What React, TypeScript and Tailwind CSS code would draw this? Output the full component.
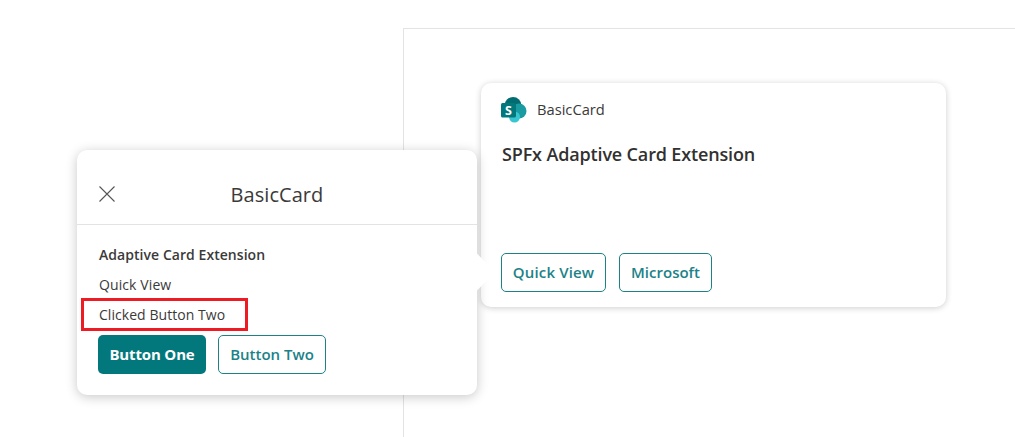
const font = "font-['Open_Sans','Noto_Sans',sans-serif]";

function SharePointLogo() {
  return (
    <svg width="26" height="26" viewBox="0 0 26 26" className="shrink-0">
      <circle cx="12" cy="8.5" r="8.5" fill="#036c70" />
      <circle cx="18" cy="14" r="7.5" fill="#1a9ba1" />
      <circle cx="13.5" cy="20" r="5.5" fill="#37c6d0" />
      <rect x="0" y="6" width="15" height="14.5" rx="1.5" fill="#03787c" />
      <text x="7.5" y="17.8" textAnchor="middle" fontSize="12.5" fontWeight="700" fill="#ffffff" fontFamily="Open Sans, sans-serif">
        S
      </text>
    </svg>
  );
}

function CloseIcon() {
  return (
    <svg width="16" height="16" viewBox="0 0 16 16" fill="none" stroke="#555555" strokeWidth="1.1">
      <path d="M0.5 0.5L15.5 15.5M15.5 0.5L0.5 15.5" />
    </svg>
  );
}

function OutlineButton({ label, className }: { label: string; className: string }) {
  return (
    <button className={`h-[39px] rounded-[5px] border border-[#1c8288] bg-white text-[15px] font-semibold text-[#1c8288] ${className}`}>
      {label}
    </button>
  );
}

export default function App() {
  return (
    <div className={`${font} relative h-[437px] w-[1015px] overflow-hidden bg-white text-[#3b3a39]`}>
      {/* Canvas with the card */}
      <div className="ml-[403px] mt-[28px] h-[409px] border-l border-t border-[#e3e3e3] pl-[77px] pt-[54px]">
        <div className="flex h-[224px] w-[465px] flex-col rounded-[10px] bg-white px-5 pb-[14px] pt-[14px] shadow-[0_1px_6px_rgba(0,0,0,0.2)]">
          <div className="flex items-center gap-[10px]">
            <SharePointLogo />
            <span className="mb-[2px] text-[14.7px] leading-[24px]">BasicCard</span>
          </div>
          <h2 className="ml-px mt-[19px] text-[18px] font-semibold leading-[24px] tracking-[-0.15px] text-[#323130]">SPFx Adaptive Card Extension</h2>
          <div className="mb-px mt-auto flex gap-[13px]">
            <OutlineButton label="Quick View" className="w-[105px] tracking-[0.15px]" />
            <OutlineButton label="Microsoft" className="w-[93px]" />
          </div>
        </div>
      </div>

      {/* Quick view popover */}
      <div className="absolute left-[77px] top-[150px] h-[245px] w-[400px] rounded-[10px] bg-white shadow-[0_2px_12px_rgba(0,0,0,0.22)]">
        <div className="absolute right-[-13px] top-[109px] h-[26px] w-[26px] rotate-45 bg-white" />
        <div className="relative flex h-[75px] items-center border-b border-[#e3e3e3] pl-[22px] pt-[14px]">
          <CloseIcon />
          <h1 className="absolute inset-x-0 top-[31px] text-center text-[20px] leading-[28px] tracking-[0.05px] text-[#3b3a39]">BasicCard</h1>
        </div>
        <div className="relative px-[22px] pt-[15px]">
          <p className="text-[14px] font-semibold leading-[30px] tracking-[0.05px]">Adaptive Card Extension</p>
          <p className="text-[14px] leading-[30px] tracking-[0.1px]">Quick View</p>
          <p className="relative text-[14px] leading-[30px] tracking-[0.05px]">
            Clicked Button Two
            <span className="absolute left-[-18px] top-[-2px] h-[33px] w-[167px] border-[3px] border-[#ed1c24]" />
          </p>
          <div className="-ml-px mt-[5px] flex gap-[12px]">
            <button className="h-[39px] w-[108px] rounded-[5px] bg-[#03787c] text-[15px] font-bold tracking-[-0.15px] text-white">Button One</button>
            <OutlineButton label="Button Two" className="w-[108px]" />
          </div>
        </div>
      </div>
    </div>
  );
}
